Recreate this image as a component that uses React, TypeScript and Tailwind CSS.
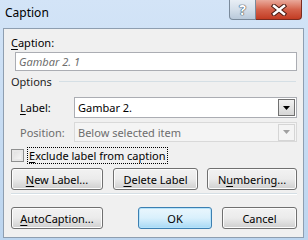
import React from 'react';

const font = { fontFamily: '"Noto Sans", "Open Sans", sans-serif' };

const Btn = ({ children, w, ok }: { children: React.ReactNode; w: string; ok?: boolean }) => (
    <div
        className={`${w} h-[22px] rounded-[3px] flex items-center justify-center text-[11px] text-black ${
            ok
                ? 'border border-[#3c7fb1] bg-gradient-to-b from-[#eaf6fd] via-[#d9f0fc] to-[#a7d9f5] shadow-[inset_0_0_0_1px_#b5e3fb]'
                : 'border border-[#707070] bg-gradient-to-b from-[#f2f2f2] via-[#ebebeb] to-[#cfcfcf] shadow-[inset_0_0_0_1px_#fcfcfc]'
        }`}
    >
        {children}
    </div>
);

const Arrow = ({ disabled }: { disabled?: boolean }) => (
    <div
        className={`w-[17px] h-[17px] mr-[1px] flex items-center justify-center border ${
            disabled ? 'border-[#d5d5d5] bg-[#f4f4f4]' : 'border-[#707070] bg-gradient-to-b from-[#f2f2f2] to-[#d6d6d6]'
        }`}
    >
        <svg width="7" height="4" viewBox="0 0 7 4">
            <path d="M0 0h7L3.5 4z" fill={disabled ? '#a0a0a0' : '#000'} />
        </svg>
    </div>
);

export default function App() {
    return (
        <div className="w-[308px] h-[240px] bg-gradient-to-b from-[#d3e4f7] to-[#bcd5ef] overflow-hidden" style={font}>
            {/* title bar */}
            <div className="h-[28px] flex items-start justify-between">
                <div className="pl-[5px] pt-[4px] text-[12px] leading-[18px] text-black">Caption</div>
                <div className="flex mr-[6px]">
                    <div className="w-[27px] h-[20px] rounded-bl-[4px] border border-t-0 border-[#7a8a9b] bg-gradient-to-b from-[#e8eef5] via-[#d4dfea] to-[#b9c9da] flex items-center justify-center">
                        <span
                            className="text-[14px] font-bold leading-none text-white"
                            style={{ textShadow: '0 0 1px #3b4a5a, 0 0 1px #3b4a5a, 0 0 1px #3b4a5a' }}
                        >
                            ?
                        </span>
                    </div>
                    <div className="w-[46px] h-[20px] rounded-br-[4px] border border-t-0 border-l-0 border-[#7b2c20] bg-gradient-to-b from-[#e9a99b] via-[#d4624b] to-[#c23b22] flex items-center justify-center">
                        <svg width="16" height="12" viewBox="0 0 16 12">
                            <path d="M3 2l10 8M13 2L3 10" stroke="#4a1a12" strokeWidth="4.5" strokeLinecap="square" />
                            <path d="M3 2l10 8M13 2L3 10" stroke="#fff" strokeWidth="2.5" strokeLinecap="square" />
                        </svg>
                    </div>
                </div>
            </div>

            {/* body */}
            <div className="mx-[3px] w-[301px] h-[210px] border border-[#8e9eb0] bg-[#f0f0f0] pl-[7px] text-[11px] leading-[15px] text-black flex flex-col">
                <div className="pt-[6px]">
                    <span className="underline underline-offset-2">C</span>aption:
                </div>
                <div className="mt-[2px] ml-[4px] w-[282px] h-[19px] border border-[#abadb3] bg-white pl-[3px] flex items-center italic text-[#6d6d6d]">
                    Gambar 2. 1
                </div>

                <div className="mt-[3px] flex items-center">
                    <span className="text-[#1e1e1e]">Options</span>
                    <div className="ml-[7px] flex-1 mr-[7px] h-px bg-[#d5dfe5]" />
                </div>

                <div className="mt-[8px] flex items-center">
                    <span className="w-[63px] pl-[9px]">
                        <span className="underline underline-offset-2">L</span>abel:
                    </span>
                    <div className="w-[223px] h-[21px] border border-[#abadb3] bg-white flex items-center justify-between">
                        <span className="pl-[3px]">Gambar 2.</span>
                        <Arrow />
                    </div>
                </div>

                <div className="mt-[4px] flex items-center text-[#6d6d6d]">
                    <span className="w-[63px] pl-[9px]">Position:</span>
                    <div className="w-[223px] h-[20px] border border-[#d9d9d9] bg-[#f4f4f4] flex items-center justify-between">
                        <span className="pl-[3px]">Below selected item</span>
                        <Arrow disabled />
                    </div>
                </div>

                <div className="mt-[5px] flex items-center h-[17px]">
                    <div className="w-[13px] h-[13px] border border-[#8e8f8f] bg-gradient-to-br from-[#dcdcdc] to-[#fbfbfb] shadow-[inset_0_0_0_2px_#e8e8e8]" />
                    <div className="ml-[3px] h-[17px] px-[1px] border border-dotted border-black flex items-center">
                        <span className="underline underline-offset-2">E</span>xclude label from caption
                    </div>
                </div>

                <div className="mt-[4px] flex">
                    <Btn w="w-[92px]">
                        <span className="underline underline-offset-2">N</span>ew Label...
                    </Btn>
                    <div className="ml-[10px]">
                        <Btn w="w-[85px]">
                            <span className="underline underline-offset-2">D</span>elete Label
                        </Btn>
                    </div>
                    <div className="ml-[9px]">
                        <Btn w="w-[90px]">
                            N<span className="underline underline-offset-2">u</span>mbering...
                        </Btn>
                    </div>
                </div>

                <div className="mt-[3px] w-[286px]">
                    <div className="h-px bg-[#d5dfe5]" />
                    <div className="h-px bg-white" />
                </div>

                <div className="mt-[12px] flex">
                    <Btn w="w-[92px]">
                        <span className="underline underline-offset-2">A</span>utoCaption...
                    </Btn>
                    <div className="ml-[35px]">
                        <Btn w="w-[74px]" ok>
                            OK
                        </Btn>
                    </div>
                    <div className="ml-[10px]">
                        <Btn w="w-[75px]">Cancel</Btn>
                    </div>
                </div>
            </div>
        </div>
    );
}
